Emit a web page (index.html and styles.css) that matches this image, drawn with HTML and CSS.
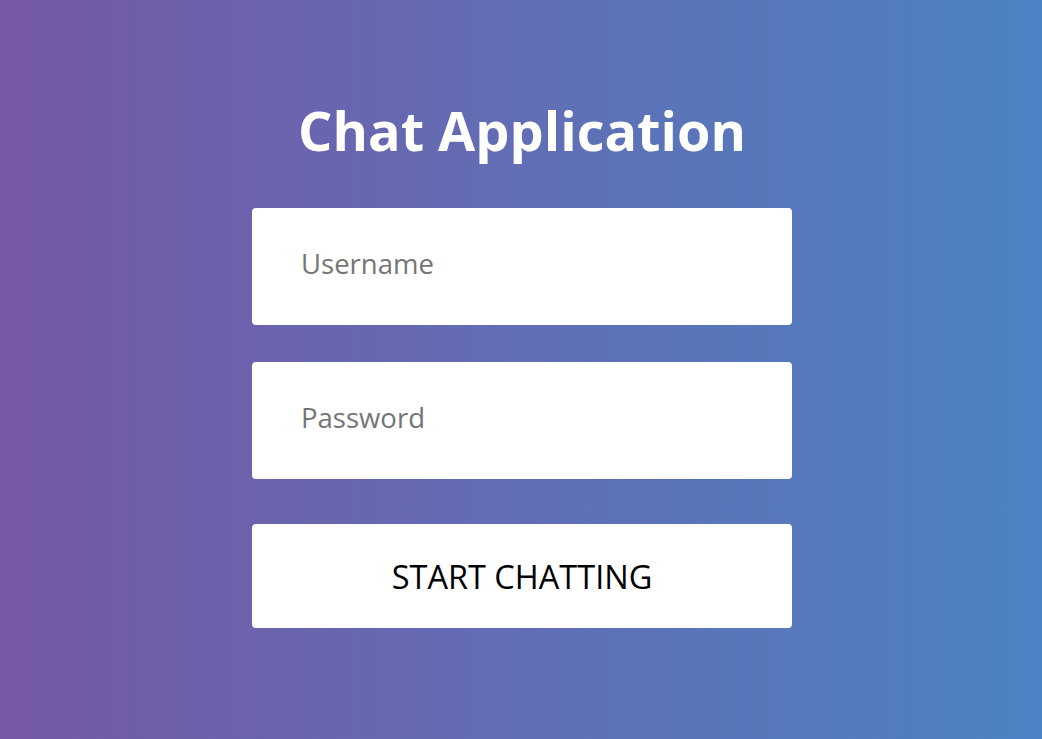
FILE: index.html
```html
<!DOCTYPE html>
<html lang="en">
<head>
    <meta charset="UTF-8">
    <meta name="viewport" content="width=device-width, initial-scale=1.0">
    <title>Chat Application</title>
    <link rel="stylesheet" href="styles.css">
</head>
<body>
    <div class="login-page">
        <h1>Chat Application</h1>
        <form class="login-form" onsubmit="return false">
            <input type="text" class="field" placeholder="Username">
            <input type="password" class="field" placeholder="Password">
            <button type="submit" class="start-btn">Start Chatting</button>
        </form>
    </div>
</body>
</html>
```

FILE: styles.css
```css
html, body {
    margin: 0;
    padding: 0;
    height: 100%;
}
body {
    font-family: "Open Sans", "Noto Sans", sans-serif;
    background: linear-gradient(to right, #7658a6, #4c83c4);
}
.login-page {
    min-height: 100%;
    display: flex;
    flex-direction: column;
    align-items: center;
    padding-top: 90px;
    padding-left: 2px;
    box-sizing: border-box;
}
h1 {
    color: #fff;
    font-size: 54px;
    font-weight: 700;
    line-height: 80px;
    margin: 0 0 38px 0;
}
.login-form {
    width: 540px;
    display: flex;
    flex-direction: column;
}
.field {
    height: 117px;
    box-sizing: border-box;
    border: none;
    border-radius: 4px;
    padding: 0 48px 6px 49px;
    font-family: inherit;
    font-size: 27.5px;
    color: #333;
    background: #fff;
    margin-bottom: 37px;
    outline: none;
}
.field::placeholder {
    color: #757575;
}
.start-btn {
    margin-top: 8px;
    height: 104px;
    border: none;
    border-radius: 4px;
    background: #fff;
    color: #000;
    font-family: inherit;
    font-size: 32.5px;
    text-transform: uppercase;
    cursor: pointer;
}
```
